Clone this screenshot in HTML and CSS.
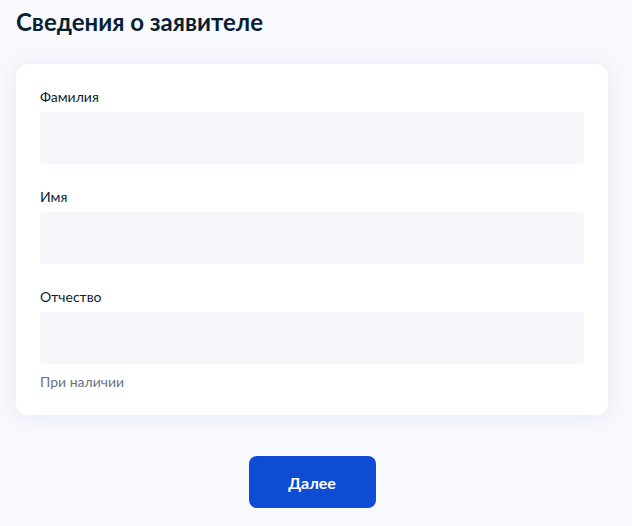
FILE: index.html
```html
<!DOCTYPE html>
<html lang="ru">
<head>
<meta charset="utf-8">
<link rel="stylesheet" href="styles.css">
</head>
<body>
<main class="page">
  <h1 class="title">Сведения о заявителе</h1>
  <section class="card">
    <div class="field">
      <label class="label">Фамилия</label>
      <div class="input"></div>
    </div>
    <div class="field">
      <label class="label">Имя</label>
      <div class="input"></div>
    </div>
    <div class="field">
      <label class="label">Отчество</label>
      <div class="input"></div>
      <div class="hint">При наличии</div>
    </div>
  </section>
  <div class="actions">
    <button class="btn">Далее</button>
  </div>
</main>
</body>
</html>
```
FILE: styles.css
```css
html, body {
  margin: 0;
  padding: 0;
  background: #f8f9fd;
  font-family: Lato, "Noto Sans", sans-serif;
  color: #0b1f33;
}
.page {
  padding: 0 24px 0 16px;
}
.title {
  margin: 0;
  padding-top: 6px;
  font-size: 24px;
  line-height: 32px;
  font-weight: 700;
  color: #0b1f33;
}
.card {
  margin-top: 26px;
  background: #fff;
  border-radius: 12px;
  padding: 24px 24px 23px;
  box-shadow: 0 2px 20px rgba(200, 210, 235, 0.35);
  display: flex;
  flex-direction: column;
  gap: 24px;
}
.field {
  display: flex;
  flex-direction: column;
}
.label {
  font-size: 14px;
  line-height: 18px;
  margin-bottom: 6px;
}
.input {
  height: 52px;
  background: #f5f6fa;
  border-radius: 4px;
}
.hint {
  margin-top: 8px;
  font-size: 14px;
  line-height: 20px;
  color: #66727f;
}
.actions {
  display: flex;
  justify-content: center;
  margin-top: 41px;
}
.btn {
  width: 127px;
  height: 52px;
  border: 0;
  border-radius: 8px;
  background: #0d4cd3;
  color: #fff;
  font-family: Lato, "Noto Sans", sans-serif;
  font-size: 16px;
  font-weight: 700;
}
```
